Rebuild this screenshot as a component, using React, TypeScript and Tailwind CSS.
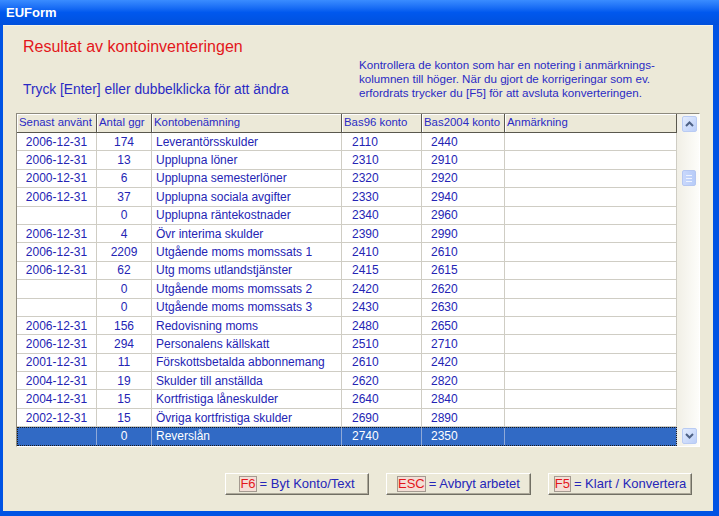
import React from "react";

type Row = [string, string, string, string, string];

const rows: Row[] = [
  ["2006-12-31", "174", "Leverantörsskulder", "2110", "2440"],
  ["2006-12-31", "13", "Upplupna löner", "2310", "2910"],
  ["2000-12-31", "6", "Upplupna semesterlöner", "2320", "2920"],
  ["2006-12-31", "37", "Upplupna sociala avgifter", "2330", "2940"],
  ["", "0", "Upplupna räntekostnader", "2340", "2960"],
  ["2006-12-31", "4", "Övr interima skulder", "2390", "2990"],
  ["2006-12-31", "2209", "Utgående moms momssats 1", "2410", "2610"],
  ["2006-12-31", "62", "Utg moms utlandstjänster", "2415", "2615"],
  ["", "0", "Utgående moms momssats 2", "2420", "2620"],
  ["", "0", "Utgående moms momssats 3", "2430", "2630"],
  ["2006-12-31", "156", "Redovisning moms", "2480", "2650"],
  ["2006-12-31", "294", "Personalens källskatt", "2510", "2710"],
  ["2001-12-31", "11", "Förskottsbetalda abbonnemang", "2610", "2420"],
  ["2004-12-31", "19", "Skulder till anställda", "2620", "2820"],
  ["2004-12-31", "15", "Kortfristiga låneskulder", "2640", "2840"],
  ["2002-12-31", "15", "Övriga kortfristiga skulder", "2690", "2890"],
  ["", "0", "Reverslån", "2740", "2350"],
];

const headers = [
  { label: "Senast använt", w: "w-[80px]" },
  { label: "Antal ggr", w: "w-[55px]" },
  { label: "Kontobenämning", w: "w-[190px]" },
  { label: "Bas96 konto", w: "w-[80px]" },
  { label: "Bas2004 konto", w: "w-[83px]" },
  { label: "Anmärkning", w: "w-[172px]" },
];

// per-column cell layout for the data rows
const cellCls = [
  "w-[80px] justify-center",
  "w-[55px] justify-center",
  "w-[190px] pl-[4px]",
  "w-[80px] pl-[10px]",
  "w-[83px] pl-[9px]",
  "w-[172px]",
];

function Chevron({ up }: { up?: boolean }) {
  return (
    <svg width="9" height="6" viewBox="0 0 9 6">
      <path
        d={up ? "M1 5 L4.5 1.5 L8 5" : "M1 1 L4.5 4.5 L8 1"}
        fill="none"
        stroke="#4D6185"
        strokeWidth="2"
      />
    </svg>
  );
}

function ScrollBtn({ children }: { children: React.ReactNode }) {
  return (
    <div className="flex h-[16px] w-[15px] items-center justify-center rounded-[2px] border border-[#B9CBF3] bg-gradient-to-br from-[#E3ECFE] to-[#BCCFF8]">
      {children}
    </div>
  );
}

function KeyButton({ k, label, w }: { k: string; label: string; w: string }) {
  return (
    <div
      className={`${w} flex h-[22px] items-center justify-center border border-t-white border-l-white border-b-[#716F64] border-r-[#716F64] bg-[#ECE9D8] shadow-[inset_-1px_-1px_0_#ACA899] text-[13px]`}
    >
      <span className="border border-[#A49A90] bg-[#F4DED6] leading-[14px] text-[#E3161B]">
        {k}
      </span>
      <span className="ml-[3px] text-[#2626B8]">= {label}</span>
    </div>
  );
}

export default function App() {
  return (
    <div className="flex h-[516px] w-[719px] flex-col bg-[#0053E4] font-['Liberation_Sans',Arial,sans-serif]">
      {/* title bar */}
      <div className="flex h-[25px] shrink-0 items-center bg-gradient-to-b from-[#3A8CFF] via-[#0058EE] to-[#0050DC] pl-[6px] text-[13px] font-bold text-white">
        EUForm
      </div>

      <div className="mb-[5px] ml-[3px] mr-[6px] flex flex-1 flex-col border-t border-[#F4F2E8] bg-[#ECE9D8]">
        {/* heading area */}
        <div className="flex h-[87px]">
          <div className="w-[356px] pl-[20px]">
            <div className="mt-[12px] text-[16px] leading-[18px] text-[#E3161B]">
              Resultat av kontoinventeringen
            </div>
            <div className="mt-[26px] text-[13.8px] leading-[16px] text-[#2A2AC4]">
              Tryck [Enter] eller dubbelklicka för att ändra
            </div>
          </div>
          <div className="pt-[32px] text-[11.6px] leading-[14px] text-[#2A2AC4]">
            <div>Kontrollera de konton som har en notering i anmärknings-</div>
            <div>kolumnen till höger. När du gjort de korrigeringar som ev.</div>
            <div>erfordrats trycker du [F5] för att avsluta konverteringen.</div>
          </div>
        </div>

        {/* grid */}
        <div className="ml-[13px] flex h-[334px] w-[684px] border border-t-[#8D8A7E] border-l-[#8D8A7E] border-b-white border-r-white">
          <div className="flex w-[660px] flex-col">
            <div className="flex h-[19px] shrink-0 border-b border-[#5A584E] bg-[#ECE9D8]">
              {headers.map((h) => (
                <div
                  key={h.label}
                  className={`${h.w} flex items-center overflow-hidden whitespace-nowrap border-r border-[#5A584E] pl-[2px] text-[11.4px] text-[#2A2AC4] shadow-[inset_1px_1px_0_#FFFFFF]`}
                >
                  {h.label}
                </div>
              ))}
            </div>
            {rows.map((r, i) => {
              const sel = i === rows.length - 1;
              return (
                <div
                  key={i}
                  className={`flex h-[18.4px] shrink-0 text-[12px] ${
                    sel
                      ? "bg-[#316AC5] text-white outline outline-1 -outline-offset-1 outline-dotted outline-[#1A1A1A]"
                      : "bg-white text-[#2424B4]"
                  }`}
                >
                  {[...r, ""].map((v, j) => (
                    <div
                      key={j}
                      className={`${cellCls[j]} flex items-center whitespace-nowrap border-r ${
                        sel ? "border-[#8FA9D8]" : "border-b border-[#CFCDC4]"
                      }`}
                    >
                      {v}
                    </div>
                  ))}
                </div>
              );
            })}
          </div>

          {/* scrollbar */}
          <div className="relative flex w-[22px] flex-col items-center justify-between bg-gradient-to-r from-[#F1EFE6] to-[#FDFDFA] py-[2px] pl-[2px]">
            <ScrollBtn>
              <Chevron up />
            </ScrollBtn>
            <div className="absolute left-[5px] top-[56px] flex h-[16px] w-[14px] flex-col items-center justify-center gap-[2px] rounded-[2px] border border-[#B5C7F1] bg-gradient-to-r from-[#C9D8FC] to-[#B7CCF8]">
              <div className="h-px w-[6px] bg-[#EEF3FE]" />
              <div className="h-px w-[6px] bg-[#EEF3FE]" />
              <div className="h-px w-[6px] bg-[#EEF3FE]" />
            </div>
            <ScrollBtn>
              <Chevron />
            </ScrollBtn>
          </div>
        </div>

        {/* buttons */}
        <div className="ml-[222px] mt-[26px] flex gap-[17px]">
          <KeyButton k="F6" label="Byt Konto/Text" w="w-[144px]" />
          <KeyButton k="ESC" label="Avbryt arbetet" w="w-[145px]" />
          <KeyButton k="F5" label="Klart / Konvertera" w="w-[144px]" />
        </div>
      </div>
    </div>
  );
}
